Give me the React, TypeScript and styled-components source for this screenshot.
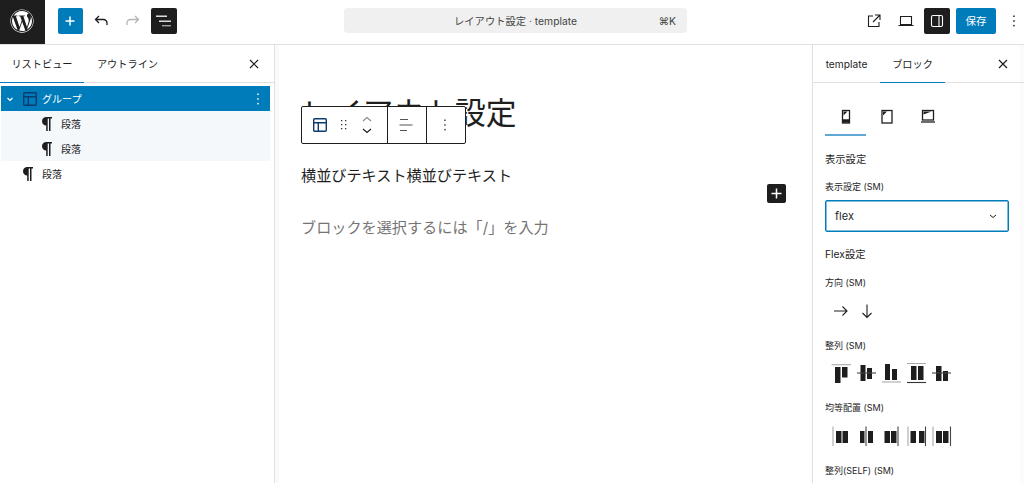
import React from "react";
import styled, { createGlobalStyle } from "styled-components";
import { FaWordpress } from "react-icons/fa";

const GlobalStyle = createGlobalStyle`
  html, body { margin: 0; height: 100%; overflow: hidden; background: #fff; }
  body {
    font-family: Inter, "Noto Sans CJK JP", sans-serif;
    color: #1e1e1e;
  }
  #root { height: 100%; }
`;

const Page = styled.div`
  display: flex;
  flex-direction: column;
  height: 483px;
  width: 1024px;
  overflow: hidden;
`;

const Header = styled.header`
  display: flex;
  align-items: flex-start;
  height: 44px;
  flex: none;
  border-bottom: 1px solid #e0e0e0;
`;

const Logo = styled.div`
  width: 45px;
  height: 44px;
  padding: 0 1px 3px 0;
  box-sizing: border-box;
  background: #1e1e1e;
  color: #fff;
  display: flex;
  align-items: center;
  justify-content: center;
  flex: none;
`;

const HeaderLeft = styled.div`
  display: flex;
  align-items: center;
  gap: 5.6px;
  margin-top: 8px;
  padding-left: 12.5px;
  width: 299px;
  box-sizing: border-box;
  flex: none;
`;

const IconButton = styled.div<{ $variant?: "primary" | "dark"; $narrow?: boolean }>`
  width: ${(p) => (p.$narrow ? 20 : 25.6)}px;
  height: 25.6px;
  border-radius: 2px;
  display: flex;
  align-items: center;
  justify-content: center;
  flex: none;
  background: ${(p) =>
    p.$variant === "primary" ? "#007cba" : p.$variant === "dark" ? "#1e1e1e" : "transparent"};
  color: ${(p) => (p.$variant ? "#fff" : "#1e1e1e")};
`;

const CommandBar = styled.div`
  width: 343px;
  height: 25px;
  margin-top: 8px;
  background: #f0f0f0;
  border-radius: 4px;
  display: flex;
  align-items: center;
  flex: none;
  position: relative;
  justify-content: center;
  font-size: 10.3px;
  color: #444;
`;

const Shortcut = styled.span`
  position: absolute;
  right: 11px;
  font-size: 10.3px;
  color: #444;
`;

const HeaderRight = styled.div`
  display: flex;
  align-items: center;
  gap: 6px;
  margin-top: 8px;
  margin-left: auto;
`;

const SaveButton = styled.div`
  width: 40px;
  height: 25.6px;
  margin-right: 2px;
  background: #007cba;
  color: #fff;
  font-size: 10.5px;
  border-radius: 2px;
  display: flex;
  align-items: center;
  justify-content: center;
`;

const Body = styled.div`
  display: flex;
  flex: 1;
  min-height: 0;
`;

const LeftPanel = styled.aside`
  width: 275px;
  flex: none;
  border-right: 1px solid #e0e0e0;
  box-sizing: border-box;
  box-shadow: 4px 0 0 #fafafa;
`;

const Tabs = styled.div`
  display: flex;
  align-items: stretch;
  height: 37px;
  border-bottom: 1px solid #e0e0e0;
`;

const Tab = styled.div<{ $width: number; $active?: boolean }>`
  width: ${(p) => p.$width}px;
  display: flex;
  align-items: center;
  justify-content: center;
  font-size: 10.2px;
  color: #1e1e1e;
  flex: none;
  margin-bottom: -1px;
  border-bottom: 1px solid ${(p) => (p.$active ? "#007cba" : "transparent")};
`;

const CloseButton = styled.div<{ $right: number }>`
  margin-left: auto;
  margin-right: ${(p) => p.$right}px;
  display: flex;
  align-items: center;
`;

const TreeList = styled.div`
  padding: 3px 4px 0 1px;
`;

const TreeRow = styled.div<{ $selected?: boolean; $child?: boolean; $indent: number }>`
  height: 25px;
  display: flex;
  align-items: center;
  padding-left: ${(p) => p.$indent}px;
  font-size: 10px;
  background: ${(p) => (p.$selected ? "#007cba" : p.$child ? "#f4f8fb" : "transparent")};
  color: ${(p) => (p.$selected ? "#fff" : "#1e1e1e")};
  gap: 3px;
`;

const Chevron = styled.span`
  width: 15px;
  margin-left: 3px;
  display: flex;
  align-items: center;
`;

const PilcrowSlot = styled.span`
  width: 16px;
  display: flex;
  justify-content: center;
  margin-right: 3px;
`;

const GroupName = styled.span`
  margin-left: 1px;
`;

const RowMore = styled.span`
  margin-left: auto;
  margin-right: 5px;
  display: flex;
`;

const Canvas = styled.main`
  flex: 1;
  position: relative;
  padding: 45px 26px 0;
  min-width: 0;
`;

const Title = styled.h1`
  margin: 0;
  font-size: 30.8px;
  font-weight: 400;
  line-height: 46px;
`;

const Paragraph = styled.p`
  margin: 0;
  font-size: 15.15px;
  line-height: 24px;
  padding-top: 28px;
`;

const Placeholder = styled(Paragraph)`
  color: #757575;
`;

const BlockToolbar = styled.div`
  position: absolute;
  left: 26px;
  top: 61px;
  height: 36px;
  display: flex;
  background: #fff;
  border: 1px solid #1e1e1e;
  border-radius: 2px;
`;

const ToolGroup = styled.div<{ $width: number; $inset?: number }>`
  width: ${(p) => p.$width}px;
  box-sizing: border-box;
  display: flex;
  align-items: center;
  justify-content: ${(p) => (p.$inset ? "flex-start" : "center")};
  padding-left: ${(p) => p.$inset ?? 0}px;
  gap: 11px;
  border-right: 1px solid #1e1e1e;
  &:last-child { border-right: 0; }
`;

const MoverStack = styled.div`
  display: flex;
  flex-direction: column;
  gap: 6px;
  margin-left: 2px;
`;

const InserterButton = styled.div`
  position: absolute;
  left: 492px;
  top: 139px;
  width: 19px;
  height: 19px;
  border-radius: 2px;
  background: #1e1e1e;
  color: #fff;
  display: flex;
  align-items: center;
  justify-content: center;
`;

const RightPanel = styled.aside`
  width: 212px;
  flex: none;
  border-left: 1px solid #e0e0e0;
  box-sizing: border-box;
  overflow: hidden;
  box-shadow: inset -4px 0 0 #fbfbfb;
`;

const Breakpoints = styled.div`
  display: flex;
  margin: 0 0 0 12px;
  height: 53px;
`;

const Breakpoint = styled.div<{ $active?: boolean }>`
  width: 41px;
  padding-top: 14px;
  display: flex;
  align-items: center;
  justify-content: center;
  border-bottom: 2px solid ${(p) => (p.$active ? "#5fa9d4" : "transparent")};
  box-sizing: border-box;
`;

const Controls = styled.div`
  padding: 0 0 0 12px;
`;

const SectionTitle = styled.div<{ $top: number }>`
  font-size: 10.3px;
  line-height: 14px;
  margin-top: ${(p) => p.$top}px;
  color: #1e1e1e;
`;

const FieldLabel = styled.div<{ $top: number }>`
  font-size: 9px;
  line-height: 12px;
  margin-top: ${(p) => p.$top}px;
  color: #1e1e1e;
`;

const SelectBox = styled.div`
  margin-top: 7px;
  width: 184px;
  height: 32px;
  box-sizing: border-box;
  border: 1px solid #007cba;
  box-shadow: inset 0 0 0 0.5px #007cba;
  border-radius: 2px;
  display: flex;
  align-items: center;
  justify-content: space-between;
  padding: 0 10px 0 9px;
  font-size: 11px;
`;

const IconRow = styled.div<{ $top: number; $gap: number }>`
  display: flex;
  gap: ${(p) => p.$gap}px;
  margin-top: ${(p) => p.$top}px;
  margin-left: 6px;
  height: 22px;
  align-items: center;
`;

const Close = () => (
  <svg width="16" height="16" viewBox="0 0 16 16" fill="none" stroke="#1e1e1e" strokeWidth="1.2">
    <path d="M4 4l8 8M12 4l-8 8" />
  </svg>
);

const Dots = ({ color = "#1e1e1e" }: { color?: string }) => (
  <svg width="14" height="16" viewBox="0 0 14 16" fill={color}>
    <rect x="6.2" y="2.5" width="1.5" height="1.5" />
    <rect x="6.2" y="7.2" width="1.5" height="1.5" />
    <rect x="6.2" y="11.9" width="1.5" height="1.5" />
  </svg>
);

const LayoutIcon = ({ color }: { color: string }) => (
  <svg width="16" height="16" viewBox="0 0 16 16" fill="none" stroke={color} strokeWidth="1.4">
    <rect x="1.7" y="1.7" width="12.6" height="12.6" rx="1" />
    <path d="M1.7 5.8h12.6M6.3 5.8v8.5" />
  </svg>
);

const Pilcrow = () => (
  <svg width="10" height="14" viewBox="0 0 10 14" fill="#1e1e1e">
    <path d="M0 4.3C0 1.8 1.8 0 4.3 0H10v1.5H8.5V14H7V1.5H5.7V14H4.2V8.6C1.8 8.6 0 6.8 0 4.3z" />
  </svg>
);

const DocView = () => (
  <svg width="20" height="20" viewBox="0 0 20 20" fill="none" strokeWidth="1.3">
    <path d="M2 5.2h11" stroke="#fff" />
    <path d="M5 10.2h12" stroke="#fff" />
    <path d="M8 14.7h9" stroke="#aaa" />
  </svg>
);

type Bar = [number, number, number, number];
type Line = [number, number, number, number, string];

const FlexIcon = ({ lines, bars }: { lines: Line[]; bars: Bar[] }) => (
  <svg width="21" height="21" viewBox="0 0 21 21">
    {bars.map((b, i) => (
      <rect key={i} x={b[0]} y={b[1]} width={b[2]} height={b[3]} fill="#1e1e1e" />
    ))}
    {lines.map((l, i) => (
      <line key={i} x1={l[0]} y1={l[1]} x2={l[2]} y2={l[3]} stroke={l[4]} strokeWidth="1.1" />
    ))}
  </svg>
);

const alignIcons: { lines: Line[]; bars: Bar[] }[] = [
  { lines: [[0.5, 1.7, 20, 1.7, "#aaa"]], bars: [[4, 4, 5.5, 16], [11, 4, 5.5, 10.5]] },
  { lines: [[1, 10, 20, 10, "#444"]], bars: [[4.5, 2, 5, 16], [11, 5, 5, 11]] },
  { lines: [[1, 19, 20, 19, "#aaa"]], bars: [[4, 1, 5, 16], [11, 6, 5, 11]] },
  { lines: [[1, 0.5, 20, 0.5, "#aaa"], [1, 19.5, 20, 19.5, "#333"]], bars: [[5, 3, 5.5, 14], [12, 3, 5.5, 14]] },
  { lines: [[1, 10, 20, 10, "#444"]], bars: [[5, 3, 5.5, 15], [12, 8, 5, 10]] },
];

const justifyIcons: { lines: Line[]; bars: Bar[] }[] = [
  { lines: [[2, 0.5, 2, 20, "#aaa"]], bars: [[5, 5, 5.5, 12], [11.5, 5, 5.5, 12]] },
  { lines: [[10, 0.5, 10, 20, "#444"]], bars: [[4, 5, 4.5, 12], [12, 5, 5, 12]] },
  { lines: [[17, 0.5, 17, 20, "#444"]], bars: [[3.5, 5, 5.5, 12], [10, 5, 5.5, 12]] },
  { lines: [[2, 0.5, 2, 20, "#aaa"], [19.5, 0.5, 19.5, 20, "#444"]], bars: [[4.5, 5, 5.5, 12], [13, 5, 5.5, 12]] },
  { lines: [[2, 0.5, 2, 20, "#aaa"], [19.5, 0.5, 19.5, 20, "#444"]], bars: [[5, 5, 6, 12], [12, 5, 5.5, 12]] },
];

export default function App() {
  return (
    <Page>
      <GlobalStyle />
      <Header>
        <Logo>
          <FaWordpress size={24} />
        </Logo>
        <HeaderLeft>
          <IconButton $variant="primary">
            <svg width="14" height="14" viewBox="0 0 14 14" stroke="#fff" strokeWidth="1.5">
              <path d="M7 2.5v9M2.5 7h9" />
            </svg>
          </IconButton>
          <IconButton>
            <svg width="18" height="18" viewBox="0 0 18 18" fill="none" stroke="#1e1e1e" strokeWidth="1.3">
              <path d="M7 4L3.5 7.5 7 11M3.5 7.5h8a3.5 3.5 0 0 1 3.5 3.5v2" />
            </svg>
          </IconButton>
          <IconButton>
            <svg width="18" height="18" viewBox="0 0 18 18" fill="none" stroke="#b5b5b5" strokeWidth="1.3">
              <path d="M11 4l3.5 3.5L11 11M14.5 7.5h-8A3.5 3.5 0 0 0 3 11v2" />
            </svg>
          </IconButton>
          <IconButton $variant="dark">
            <DocView />
          </IconButton>
        </HeaderLeft>
        <CommandBar>
          レイアウト設定 · template
          <Shortcut>⌘K</Shortcut>
        </CommandBar>
        <HeaderRight>
          <IconButton>
            <svg width="16" height="16" viewBox="0 0 16 16" fill="none" stroke="#1e1e1e" strokeWidth="1.1">
              <path d="M7 3H2.5v10.5H13V9M9 2h5v5M14 2L7 9" />
            </svg>
          </IconButton>
          <IconButton>
            <svg width="18" height="18" viewBox="0 0 18 18" fill="none" stroke="#1e1e1e" strokeWidth="1.1">
              <path d="M3.5 4.5h11v8h-11zM1.5 13.5h15" />
            </svg>
          </IconButton>
          <IconButton $variant="dark">
            <svg width="16" height="16" viewBox="0 0 16 16" fill="none" stroke="#fff" strokeWidth="1.1">
              <rect x="2.5" y="2.5" width="11" height="11" rx="1.5" />
              <path d="M10 2.5v11" />
            </svg>
          </IconButton>
          <SaveButton>保存</SaveButton>
          <IconButton $narrow>
            <Dots />
          </IconButton>
        </HeaderRight>
      </Header>
      <Body>
        <LeftPanel>
          <Tabs>
            <Tab $width={84} $active>リストビュー</Tab>
            <Tab $width={87}>アウトライン</Tab>
            <CloseButton $right={12}>
              <Close />
            </CloseButton>
          </Tabs>
          <TreeList>
            <TreeRow $selected $indent={0}>
              <Chevron>
                <svg width="12" height="12" viewBox="0 0 12 12" fill="none" stroke="#fff" strokeWidth="1.2">
                  <path d="M3.5 5l2.5 2.5L8.5 5" />
                </svg>
              </Chevron>
              <LayoutIcon color="#0b3b6f" />
              <GroupName>グループ</GroupName>
              <RowMore>
                <Dots color="#fff" />
              </RowMore>
            </TreeRow>
            <TreeRow $child $indent={38}>
              <PilcrowSlot><Pilcrow /></PilcrowSlot>
              段落
            </TreeRow>
            <TreeRow $child $indent={38}>
              <PilcrowSlot><Pilcrow /></PilcrowSlot>
              段落
            </TreeRow>
            <TreeRow $indent={19}>
              <PilcrowSlot><Pilcrow /></PilcrowSlot>
              段落
            </TreeRow>
          </TreeList>
        </LeftPanel>
        <Canvas>
          <Title>レイアウト設定</Title>
          <Paragraph>横並びテキスト横並びテキスト</Paragraph>
          <Placeholder>ブロックを選択するには「/」を入力</Placeholder>
          <BlockToolbar>
            <ToolGroup $width={86} $inset={10}>
              <LayoutIcon color="#0b3b6f" />
              <svg width="10" height="14" viewBox="0 0 10 14" fill="#333">
                <rect x="2" y="2" width="1.3" height="1.3" />
                <rect x="6" y="2" width="1.3" height="1.3" />
                <rect x="2" y="6" width="1.3" height="1.3" />
                <rect x="6" y="6" width="1.3" height="1.3" />
                <rect x="2" y="10" width="1.3" height="1.3" />
                <rect x="6" y="10" width="1.3" height="1.3" />
              </svg>
              <MoverStack>
                <svg width="10" height="6" viewBox="0 0 10 6" fill="none" stroke="#888" strokeWidth="1.1">
                  <path d="M1 5l4-3.5L9 5" />
                </svg>
                <svg width="10" height="6" viewBox="0 0 10 6" fill="none" stroke="#1e1e1e" strokeWidth="1.2">
                  <path d="M1 1l4 3.5L9 1" />
                </svg>
              </MoverStack>
            </ToolGroup>
            <ToolGroup $width={39}>
              <svg width="16" height="16" viewBox="0 0 16 16" stroke="#555" strokeWidth="1.1">
                <path d="M1 2.5h8M0.5 8h13M1 13.5h7" />
              </svg>
            </ToolGroup>
            <ToolGroup $width={38} $inset={11}>
              <Dots color="#444" />
            </ToolGroup>
          </BlockToolbar>
          <InserterButton>
            <svg width="13" height="13" viewBox="0 0 13 13" stroke="#fff" strokeWidth="1.5">
              <path d="M6.5 1.5v10M1.5 6.5h10" />
            </svg>
          </InserterButton>
        </Canvas>
        <RightPanel>
          <Tabs>
            <Tab $width={67}>template</Tab>
            <Tab $width={65} $active>ブロック</Tab>
            <CloseButton $right={13}>
              <Close />
            </CloseButton>
          </Tabs>
          <Breakpoints>
            <Breakpoint $active>
              <svg width="16" height="18" viewBox="0 0 16 18" fill="none" stroke="#1e1e1e" strokeWidth="1.3">
                <rect x="4.5" y="3.5" width="7" height="12.5" />
                <path d="M5.5 4.5h4l-4 4z" fill="#1e1e1e" stroke="none" />
                <path d="M4.5 14h7" strokeWidth="3.5" />
              </svg>
            </Breakpoint>
            <Breakpoint>
              <svg width="16" height="18" viewBox="0 0 16 18" fill="none" stroke="#1e1e1e" strokeWidth="1.3">
                <rect x="3" y="3.5" width="10" height="12.5" />
                <path d="M4 4.5h4l-4 4z" fill="#1e1e1e" stroke="none" />
              </svg>
            </Breakpoint>
            <Breakpoint>
              <svg width="16" height="18" viewBox="0 0 16 18" fill="none" stroke="#1e1e1e" strokeWidth="1.3">
                <rect x="2.5" y="3.5" width="11" height="9.5" />
                <path d="M3.5 4.5h8l-8 3z" fill="#1e1e1e" stroke="none" />
                <path d="M1 15h14" />
              </svg>
            </Breakpoint>
          </Breakpoints>
          <Controls>
            <SectionTitle $top={16}>表示設定</SectionTitle>
            <FieldLabel $top={15}>表示設定 (SM)</FieldLabel>
            <SelectBox>
              flex
              <svg width="10" height="10" viewBox="0 0 10 10" fill="none" stroke="#1e1e1e" strokeWidth="1">
                <path d="M2 4l3 2.5L8 4" />
              </svg>
            </SelectBox>
            <SectionTitle $top={15}>Flex設定</SectionTitle>
            <FieldLabel $top={16}>方向 (SM)</FieldLabel>
            <IconRow $top={11} $gap={6}>
              <svg width="20" height="20" viewBox="0 0 20 20" fill="none" stroke="#1e1e1e" strokeWidth="1.1">
                <path d="M3 10h13M11.5 5.5L16 10l-4.5 4.5" />
              </svg>
              <svg width="20" height="20" viewBox="0 0 20 20" fill="none" stroke="#1e1e1e" strokeWidth="1.1">
                <path d="M10 3.5v13M5.5 12l4.5 4.5 4.5-4.5" />
              </svg>
            </IconRow>
            <FieldLabel $top={18}>整列 (SM)</FieldLabel>
            <IconRow $top={10} $gap={4}>
              {alignIcons.map((icon, i) => (
                <FlexIcon key={i} {...icon} />
              ))}
            </IconRow>
            <FieldLabel $top={18}>均等配置 (SM)</FieldLabel>
            <IconRow $top={11} $gap={4}>
              {justifyIcons.map((icon, i) => (
                <FlexIcon key={i} {...icon} />
              ))}
            </IconRow>
            <FieldLabel $top={18}>整列(SELF) (SM)</FieldLabel>
          </Controls>
        </RightPanel>
      </Body>
    </Page>
  );
}
